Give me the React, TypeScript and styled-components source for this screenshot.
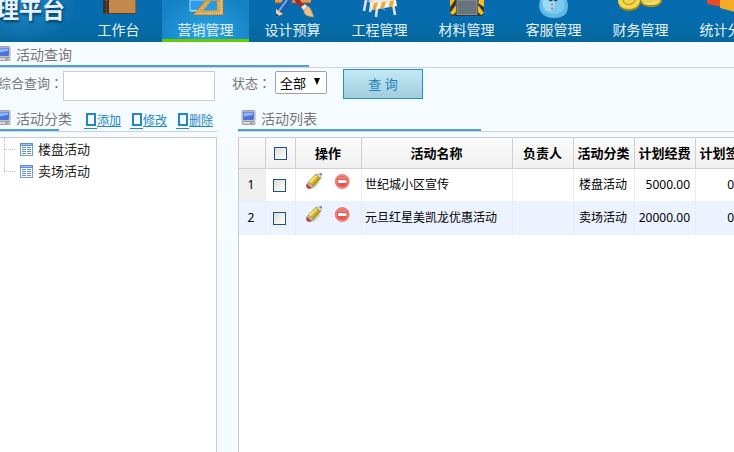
import React from "react";
import styled, { createGlobalStyle } from "styled-components";

const GlobalStyle = createGlobalStyle`
  *, *::before { box-sizing: border-box; }
  html, body { margin: 0; height: 100%; }
  body {
    background: #f5fbff;
    font-family: "Noto Sans", "Noto Sans CJK SC", sans-serif;
    font-size: 13px;
    line-height: 20px;
    color: #777;
    overflow: hidden;
  }
  button, input, select { font: inherit; }
`;

const Page = styled.div`
  display: flex;
  flex-direction: column;
  min-height: 100vh;
  overflow: hidden;
`;

const Header = styled.header`
  display: flex;
  align-items: flex-end;
  height: 42px;
  overflow: hidden;
  background: linear-gradient(#066caf 0%, #066cae 45%, #05679a 100%);
`;

const Brand = styled.h1`
  flex: none;
  display: flex;
  justify-content: flex-end;
  width: 75px;
  height: 42px;
  margin: 0;
  padding-right: 10px;
  overflow: hidden;
  color: #e4f3fd;
  font-size: 23px;
  font-weight: 700;
  line-height: 18px;
  white-space: nowrap;
  text-shadow: 1px 2px 3px #08395f;
  background: radial-gradient(ellipse at 30% 10%, #2387c5, transparent 75%);
`;

const Nav = styled.nav`
  display: flex;
  flex: 1;
  overflow: hidden;
`;

const NavLink = styled.a<{ $active?: boolean }>`
  flex: none;
  display: flex;
  flex-direction: column;
  align-items: center;
  width: 87px;
  height: 42px;
  color: #e6f3fb;
  font-size: 14px;
  text-decoration: none;
  background: ${(p) =>
    p.$active
      ? "radial-gradient(ellipse at 50% 90%, #2ba3e4, #1482c5 85%)"
      : "none"};
  border-bottom: ${(p) => (p.$active ? "3px solid #66cc00" : "0")};
`;

const NavIcon = styled.svg`
  display: block;
  flex: none;
  width: 50px;
  height: 20px;
`;

const Title = styled.div<{ $accent: number }>`
  display: flex;
  align-items: center;
  height: 26px;
  border-bottom: 1px solid #ccd3d9;
  background: linear-gradient(#4f9fd6, #4f9fd6) left bottom / ${(p) => p.$accent}px 2px no-repeat;
  & > svg { margin-bottom: 2px; }
`;

const TitleText = styled.h2`
  margin: 0 0 0 5px;
  color: #777;
  font-size: 14px;
  font-weight: 400;
  white-space: nowrap;
`;

const Actions = styled.div`
  display: flex;
  gap: 9px;
  margin-left: auto;
  padding: 4px 4px 0 0;
`;

const ActionLink = styled.a`
  display: flex;
  align-items: center;
  color: #2486c5;
  font-size: 12px;
  text-decoration: underline;
`;

const MissingGlyph = styled.span`
  display: flex;
  align-items: flex-start;
  width: 13px;
  height: 16px;
  padding-left: 2px;
  border-bottom: 1px solid #2486c5;
  &::before {
    content: "";
    width: 10px;
    height: 13px;
    border: 2px solid #2486c5;
  }
`;

const QueryForm = styled.form`
  display: flex;
  align-items: flex-start;
  height: 38px;
  padding-top: 1px;
`;

const Label = styled.label<{ $width: number; $gap?: number }>`
  flex: none;
  display: flex;
  justify-content: flex-end;
  width: ${(p) => p.$width}px;
  padding: 4px ${(p) => p.$gap || 0}px 0 0;
  white-space: nowrap;
`;

const Colon = styled.span`
  font-family: "Noto Sans CJK TC", sans-serif;
`;

const TextBox = styled.input`
  width: 152px;
  height: 30px;
  margin-top: 2px;
  padding: 0 4px;
  background: #fff;
  border: 1px solid #ccc;
`;

const SelectWrap = styled.span`
  display: grid;
  align-items: center;
  width: 52px;
  height: 23px;
  margin: 2px 16px 0 0;
  background: #fff;
  border: 1px solid #a0a0a0;
  border-radius: 2px;
  & > * { grid-area: 1 / 1; }
  & > svg { justify-self: end; margin: 0 5px 2px 0; pointer-events: none; z-index: 1; }
`;

const Select = styled.select`
  appearance: none;
  width: 100%;
  height: 21px;
  padding: 0 4px;
  color: #000;
  line-height: 20px;
  background: transparent;
  border: 0;
`;

const SearchButton = styled.button`
  width: 80px;
  height: 30px;
  padding: 0;
  color: #1f82bd;
  background: linear-gradient(#c2e9f4, #a2cddd);
  border: 1px solid #2590c6;
`;

const Columns = styled.main`
  display: grid;
  grid-template-columns: 217px minmax(0, 1fr);
  column-gap: 21px;
  flex: 1;
`;

const Column = styled.section`
  display: flex;
  flex-direction: column;
  gap: 5px;
  min-width: 0;
`;

const TreeBox = styled.ul`
  flex: 1;
  margin: 0;
  padding: 0 0 0 4px;
  list-style: none;
  background: #fff;
  border: solid #ccc;
  border-width: 1px 1px 0 0;
`;

const TreeItem = styled.li`
  display: flex;
  align-items: center;
  height: 22px;
  color: #222;
`;

const Branch = styled.span<{ $last?: boolean }>`
  flex: none;
  align-self: stretch;
  width: 12px;
  margin-right: 4px;
  background:
    repeating-linear-gradient(90deg, #bbb 0 1px, transparent 1px 2px) left 11px / 12px 1px no-repeat,
    repeating-linear-gradient(#bbb 0 1px, transparent 1px 2px) left top / 1px ${(p) => (p.$last ? "11px" : "100%")} no-repeat;
`;

const TreeText = styled.span`
  margin-left: 5px;
`;

const TableBox = styled.div`
  flex: 1;
  overflow: hidden;
  background: #fff;
  border: solid #ccc;
  border-width: 1px 0 0 1px;
`;

const Table = styled.table`
  width: 518px;
  table-layout: fixed;
  border-collapse: separate;
  border-spacing: 0;
  color: #000;
  font-size: 12px;
`;

const HeadCell = styled.th`
  height: 31px;
  padding: 0 1px 1px 0;
  font-size: 13px;
  font-weight: 700;
  white-space: nowrap;
  background: linear-gradient(#fbfbfb, #f0f0f0);
  border: solid #d0d0d0;
  border-width: 0 1px 1px 0;
`;

const Row = styled.tr<{ $alt?: boolean }>`
  height: ${(p) => (p.$alt ? 34 : 32)}px;
  background: ${(p) => (p.$alt ? "#ecf3ff" : "#fff")};
`;

const Cell = styled.td<{ $align?: string; $shade?: boolean }>`
  padding: 0 5px 0 3px;
  text-align: ${(p) => p.$align || "left"};
  white-space: nowrap;
  background: ${(p) => (p.$shade ? "#efefef" : "transparent")};
  border-right: 1px solid #ececec;
`;

const Check = styled.input`
  appearance: none;
  display: block;
  width: 13px;
  height: 13px;
  margin: 1px auto 0;
  background: linear-gradient(135deg, #dcdcd7, #fff);
  border: 1px solid #1c5180;
`;

const RowTools = styled.div`
  display: flex;
  justify-content: center;
  gap: 12px;
  padding-bottom: 8px;
`;

const IconButton = styled.button`
  display: block;
  width: 17px;
  height: 17px;
  padding: 0;
  background: none;
  border: 0;
  & > svg { display: block; }
`;

const MonitorArt = () => (
  <g>
    <rect x="1" y="0.5" width="13" height="10.5" rx="1" fill="#dcdce0" stroke="#a2a2a8" />
    <rect x="2.5" y="2" width="10" height="7.5" fill="#4474e0" stroke="#3158b8" strokeWidth="0.6" />
    <path d="M2.8 2.4h9.4v2.4L2.8 6.8z" fill="#8fb4f6" />
    <rect x="1" y="11.5" width="13" height="3" rx="1" fill="#d8d8da" stroke="#98989c" strokeWidth="0.9" />
    <path d="M9 13h3.5" stroke="#7b7b80" />
  </g>
);

const PageIcon = ({ clipped = false }: { clipped?: boolean }) => (
  <svg
    width={clipped ? 11 : 18}
    height="15"
    viewBox={clipped ? "4 0 11 15" : "-3 0 18 15"}
    aria-hidden="true"
  >
    <MonitorArt />
  </svg>
);

const ListIcon = () => (
  <svg width="13" height="13" viewBox="0 0 13 13" shapeRendering="crispEdges" aria-hidden="true">
    <rect x="0.5" y="0.5" width="12" height="12" fill="#fff" stroke="#6d9edb" />
    <path d="M0 1.5h13" stroke="#5a90d4" strokeWidth="3" />
    <path d="M1 1.5h11" stroke="#93c5ef" />
    <path d="M2 4.5h4M7 4.5h4M2 6.5h4M7 6.5h4M2 8.5h4M7 8.5h4M2 10.5h4M7 10.5h4" stroke="#5f93cf" />
  </svg>
);

const PencilIcon = () => (
  <svg width="17" height="17" viewBox="0 0 17 17" aria-hidden="true">
    <path d="M5 16.2 10 15l6-7-4 1z" fill="#999" opacity="0.35" />
    <path d="M3.2 9.3 10.6 1.6 15.6 5.6 8.4 13.6z" fill="#d9bc25" stroke="#8a7426" strokeWidth="0.7" />
    <path d="M4.6 9.6 11.4 2.6" stroke="#f7ec86" strokeWidth="1.6" />
    <path d="M7.6 12.2 14.4 5" stroke="#a88d1b" strokeWidth="1.1" />
    <path d="M10.6 1.6 16.6.4 15.6 5.6z" fill="#e6d5ae" stroke="#8b8170" strokeWidth="0.5" />
    <path d="m14.6.8 2-.4-.3 1.9z" fill="#444" />
    <path d="m3.2 9.3 5.2 4.3-1.5 1.5L1.8 10.8z" fill="#bcc5b8" stroke="#7e857b" strokeWidth="0.5" />
    <path d="M1.8 10.8c-1.2 1.2-.9 4 .9 4.7 1.6.7 3.2.4 4.2-.4z" fill="#c9403a" />
  </svg>
);

const RemoveIcon = () => (
  <svg width="17" height="17" viewBox="0 0 17 17" aria-hidden="true">
    <circle cx="8.2" cy="8.5" r="7" fill="#e8544c" stroke="#dd7c74" strokeWidth="0.8" />
    <circle cx="8.2" cy="8.5" r="6" fill="none" stroke="#f79a92" strokeWidth="0.9" />
    <path d="M3.6 6C5 2.8 11.4 2.8 12.8 6z" fill="#f29288" opacity="0.7" />
    <rect x="4" y="7" width="8.4" height="3" rx="0.5" fill="#fff" />
  </svg>
);

const navArt: Record<string, React.ReactNode> = {
  book: (
    <g>
      <path d="M9 0h33v14H9z" fill="#c38a4c" />
      <path d="M9 0h6v14H9z" fill="#3b332f" />
      <path d="M12.5 0v13" stroke="#8c7053" strokeDasharray="1 2" />
      <path d="M9 13.5h33" stroke="#5f3c20" />
      <path d="M41.5 0v13" stroke="#9a6430" />
    </g>
  ),
  ruler: (
    <g>
      <path d="M9 0h24v11H9z" fill="#2f9bea" stroke="#a9dcf9" />
      <path d="M10 10.5h20" stroke="#d4effc" />
      <path d="M12 15 25 0h17v15z" fill="#dba84f" stroke="#a1752f" strokeWidth="0.6" />
      <path d="M22 10.5 30 1h6v9.5z" fill="#2a9ae0" />
      <path d="M40.5 0v14" stroke="#f5d48a" strokeDasharray="1 1" strokeWidth="2" />
      <path d="M15 13.5h25" stroke="#f5d48a" strokeDasharray="1 1" />
    </g>
  ),
  design: (
    <g>
      <path d="M7 0h36v3H7z" fill="#dc9f58" />
      <path d="M7 3h36" stroke="#8f5425" />
      <path d="M15 0h10L16 13l-5 3-4-4z" fill="#1d5cab" />
      <path d="M19 0 10 12" stroke="#68afe9" strokeWidth="2" />
      <path d="m8 9 7 5-7 3z" fill="#efcf9e" />
      <path d="m8 13.5 3 2-3 1.5z" fill="#1b3f7d" />
      <path d="m26 0 8 9 3-2-5-7z" fill="#ae2723" />
      <path d="m33 7 4-3 3 3-4 4z" fill="#e6e6e6" stroke="#888" strokeWidth="0.6" />
      <path d="m36 10 4-4c3 2 4 6 6 11-6 0-11-2-10-7z" fill="#e6c08d" stroke="#a6743d" strokeWidth="0.6" />
    </g>
  ),
  barrier: (
    <g>
      <path d="m11 0-2 11M17 0l-2 12M22 8l-1 9M38 4l2 11" stroke="#dededc" strokeWidth="2.6" />
      <path d="m15 3 26-3 1 6-26 4z" fill="#f6f4ec" />
      <path d="M14 0h27v1l-26 3z" fill="#eceae4" />
      <path d="m19 3 4-.6-2 6.6-4 .6zM27 2l4-.6L29 8l-4 .6zM35 1l4-.6L37.5 6.7l-4 .6z" fill="#f0a930" />
      <path d="M12 1h6M27 8l3 2" stroke="#bfc3c6" />
    </g>
  ),
  material: (
    <g>
      <path d="M8 0h34v12q0 4-4 4H12q-4 0-4-4z" fill="#33373a" />
      <path d="M8 7V0h5zM8 13l6-8v7l-3 3zM42 7V0h-5l-1 3zM42 13l-6-8v7l3 3z" fill="#f1bd22" />
      <path d="M15 0h20v14.5H15z" fill="#69737a" stroke="#98a0a4" strokeWidth="0.8" />
    </g>
  ),
  service: (
    <g>
      <path d="M11 0h27c3 11-1 18-13 18S8 10 11 0z" fill="#5fb9e6" />
      <path d="M13 0h22c2 9-2 14-10 14S11 9 13 0z" fill="#7dcaee" />
      <path d="M14 0h12c1 6-2 11-6 11S13 6 14 0z" fill="#9adaf5" />
      <path d="m19 0 3 1.5L24 0l3 1.5L29 0z" fill="#253b50" />
      <circle cx="23" cy="4.5" r="0.9" fill="#dc5656" />
      <circle cx="23" cy="8.5" r="0.9" fill="#dc5656" />
    </g>
  ),
  coins: (
    <g>
      <path d="M24 0h22c-1 5-4 7-11 7s-10-2-11-7z" fill="#ad8a15" />
      <path d="M25 0h20c-1 3-4 5-10 5S26 3 25 0z" fill="#ecd24a" />
      <path d="M2 0h23c0 7-5 11-12 11S2 7 2 0z" fill="#a98612" />
      <path d="M2 0h22c0 5-5 9-11 9S2 6 2 0z" fill="#efd94f" />
      <path d="M7 0c1 6 10 6 12 0" fill="none" stroke="#c4a526" strokeWidth="1.5" />
      <path d="M28 3.5c5 1 11 0 14-2" fill="none" stroke="#fff6a8" />
    </g>
  ),
  stats: (
    <g>
      <path d="M4 0h13v6.5L4 4z" fill="#ea4a28" />
      <path d="M17 0h15v12l-15-4z" fill="#f5ab22" />
      <path d="M32 0h13v8l-13 4z" fill="#dd7c15" />
    </g>
  ),
};

const navItems = [
  { label: "工作台", art: "book" },
  { label: "营销管理", art: "ruler", active: true },
  { label: "设计预算", art: "design" },
  { label: "工程管理", art: "barrier" },
  { label: "材料管理", art: "material" },
  { label: "客服管理", art: "service" },
  { label: "财务管理", art: "coins" },
  { label: "统计分析", art: "stats" },
];

const columns = [
  { label: "", width: 27 },
  { label: "select", width: 30 },
  { label: "操作", width: 66 },
  { label: "活动名称", width: 151 },
  { label: "负责人", width: 61 },
  { label: "活动分类", width: 61 },
  { label: "计划经费", width: 61 },
  { label: "计划签单", width: 61 },
];

const activities = [
  { name: "世纪城小区宣传", owner: "", kind: "楼盘活动", budget: "5000.00", signed: "0.00" },
  { name: "元旦红星美凯龙优惠活动", owner: "", kind: "卖场活动", budget: "20000.00", signed: "0.00" },
];

const categories = ["楼盘活动", "卖场活动"];

export default function App() {
  return (
    <Page>
      <GlobalStyle />
      <Header>
        <Brand>理平台</Brand>
        <Nav>
          {navItems.map((item) => (
            <NavLink key={item.label} href="#" $active={item.active}>
              <NavIcon viewBox="0 0 50 20" aria-hidden="true">{navArt[item.art]}</NavIcon>
              {item.label}
            </NavLink>
          ))}
        </Nav>
      </Header>

      <Title $accent={309}>
        <PageIcon clipped />
        <TitleText>活动查询</TitleText>
      </Title>

      <QueryForm onSubmit={(e) => e.preventDefault()}>
        <Label $width={63} htmlFor="keyword">综合查询<Colon>：</Colon></Label>
        <TextBox id="keyword" type="text" />
        <Label $width={60} $gap={4} htmlFor="status">状态<Colon>：</Colon></Label>
        <SelectWrap>
          <Select id="status" defaultValue="all">
            <option value="all">全部</option>
          </Select>
          <svg width="8" height="7" viewBox="0 0 8 7" aria-hidden="true">
            <path d="M1 0h6L4 7z" fill="#000" />
          </svg>
        </SelectWrap>
        <SearchButton type="submit">查 询</SearchButton>
      </QueryForm>

      <Columns>
        <Column>
          <Title $accent={59}>
            <PageIcon clipped />
            <TitleText>活动分类</TitleText>
            <Actions>
              {["添加", "修改", "删除"].map((label) => (
                <ActionLink key={label} href="#">
                  <MissingGlyph />
                  {label}
                </ActionLink>
              ))}
            </Actions>
          </Title>
          <TreeBox>
            {categories.map((name, i) => (
              <TreeItem key={name}>
                <Branch $last={i === categories.length - 1} />
                <ListIcon />
                <TreeText>{name}</TreeText>
              </TreeItem>
            ))}
          </TreeBox>
        </Column>

        <Column>
          <Title $accent={243}>
            <PageIcon />
            <TitleText>活动列表</TitleText>
          </Title>
          <TableBox>
            <Table>
              <colgroup>
                {columns.map((c, i) => (
                  <col key={i} width={c.width} />
                ))}
              </colgroup>
              <thead>
                <tr>
                  {columns.map((c, i) => (
                    <HeadCell key={i}>
                      {c.label === "select" ? <Check type="checkbox" aria-label="全选" /> : c.label}
                    </HeadCell>
                  ))}
                </tr>
              </thead>
              <tbody>
                {activities.map((a, i) => (
                  <Row key={a.name} $alt={i % 2 === 1}>
                    <Cell $align="center" $shade={i % 2 === 0}>{i + 1}</Cell>
                    <Cell>
                      <Check type="checkbox" aria-label={a.name} />
                    </Cell>
                    <Cell>
                      <RowTools>
                        <IconButton type="button" aria-label="修改"><PencilIcon /></IconButton>
                        <IconButton type="button" aria-label="删除"><RemoveIcon /></IconButton>
                      </RowTools>
                    </Cell>
                    <Cell>{a.name}</Cell>
                    <Cell>{a.owner}</Cell>
                    <Cell $align="center">{a.kind}</Cell>
                    <Cell $align="right">{a.budget}</Cell>
                    <Cell $align="right">{a.signed}</Cell>
                  </Row>
                ))}
              </tbody>
            </Table>
          </TableBox>
        </Column>
      </Columns>
    </Page>
  );
}
